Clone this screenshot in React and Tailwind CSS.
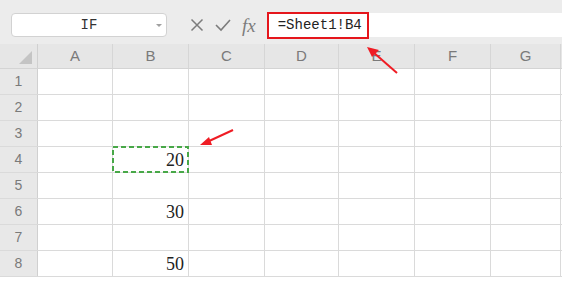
import React from 'react';

const columns = [
  { label: 'A', width: 'w-[75px]' },
  { label: 'B', width: 'w-[76px]' },
  { label: 'C', width: 'w-[76px]' },
  { label: 'D', width: 'w-[74px]' },
  { label: 'E', width: 'w-[76px]' },
  { label: 'F', width: 'w-[76px]' },
  { label: 'G', width: 'w-[70px]' },
];

const values = { 4: '20', 6: '30', 8: '50' };

const NameBox = () => (
  <div className="relative flex h-[24px] w-[156px] items-center justify-center rounded-[4px] border border-[#d2d2d2] bg-white">
    <span className="font-['Liberation_Mono',monospace] text-[14px] text-[#333]">IF</span>
    <span className="absolute right-[4px] top-[10px] h-0 w-0 border-x-[3px] border-t-[3px] border-x-transparent border-t-[#a0a0a0]" />
  </div>
);

const FormulaIcons = () => (
  <div className="flex h-[24px] items-center gap-[11px] pl-[23px] pr-[11px] text-[#7c7c7c]">
    <svg width="14" height="14" viewBox="0 0 14 14" fill="none" stroke="currentColor" strokeWidth="1.5">
      <path d="M1.5 1.5 L12.5 12.5 M12.5 1.5 L1.5 12.5" />
    </svg>
    <svg width="16" height="14" viewBox="0 0 16 14" fill="none" stroke="currentColor" strokeWidth="1.6">
      <path d="M1 7 L6 12 L15 2" />
    </svg>
    <span className="font-['Liberation_Serif',serif] text-[19px] italic leading-none">fx</span>
  </div>
);

const HeaderRow = () => (
  <div className="flex h-[25px] border-b border-[#d4d4d4] bg-[#e6e6e6]">
    <div className="relative w-[38px] border-r border-[#d0d0d0]">
      <span className="absolute bottom-[4px] right-[5px] h-0 w-0 border-b-[13px] border-l-[13px] border-b-[#c4c4c4] border-l-transparent" />
    </div>
    {columns.map((col) => (
      <div
        key={col.label}
        className={`${col.width} flex items-center justify-center border-r border-[#d6d6d6] font-['Liberation_Sans',sans-serif] text-[15px] text-[#7a7a7a]`}
      >
        {col.label}
      </div>
    ))}
  </div>
);

const Row = ({ index }) => (
  <div className="flex h-[26px] border-b border-[#dadada]">
    <div className="flex w-[38px] items-center justify-center border-r border-[#d0d0d0] bg-[#e8e8e8] font-['Liberation_Sans',sans-serif] text-[14px] text-[#7a7a7a]">
      {index}
    </div>
    {columns.map((col) => {
      const isB = col.label === 'B';
      const value = isB ? values[index] : null;
      const selected = isB && index === 4;
      return (
        <div key={col.label} className={`${col.width} relative flex items-center justify-end border-r border-[#dadada] pr-[4px]`}>
          {value && (
            <span className="font-['Liberation_Serif',serif] text-[18px] leading-none text-[#222]">{value}</span>
          )}
          {selected && (
            <svg className="absolute left-[-1px] top-[-1px]" width="77" height="27" viewBox="0 0 77 27" fill="none">
              <rect x="1" y="1" width="75" height="25" stroke="#48a848" strokeWidth="2" strokeDasharray="5 3" />
            </svg>
          )}
        </div>
      );
    })}
  </div>
);

const App = () => (
  <div className="relative h-[281px] w-[588px] overflow-hidden bg-white">
    <div className="w-[562px]">
      <div className="flex h-[44px] items-start bg-[#ececec] pl-[11px] pt-[13px]">
        <NameBox />
        <FormulaIcons />
        <div className="flex h-[24px] flex-1 items-center bg-white">
          <div className="-my-[1px] flex h-[27px] w-[102px] items-center border-2 border-[#e5161c] pl-[9px]">
            <span className="font-['Liberation_Mono',monospace] text-[14px] text-[#222]">=Sheet1!B4</span>
          </div>
        </div>
      </div>
      <HeaderRow />
      {[1, 2, 3, 4, 5, 6, 7, 8].map((i) => (
        <Row key={i} index={i} />
      ))}
    </div>

    <svg className="pointer-events-none absolute inset-0" width="588" height="281" viewBox="0 0 588 281">
      <g stroke="#ef1c24" strokeWidth="2" fill="#ef1c24">
        <line x1="397" y1="73" x2="373" y2="52" />
        <polygon points="367,47 379,50 372,57" stroke="none" />
        <line x1="233" y1="130" x2="207" y2="142" />
        <polygon points="200,145 209,137 212,145" stroke="none" />
      </g>
    </svg>
  </div>
);

export default App;
